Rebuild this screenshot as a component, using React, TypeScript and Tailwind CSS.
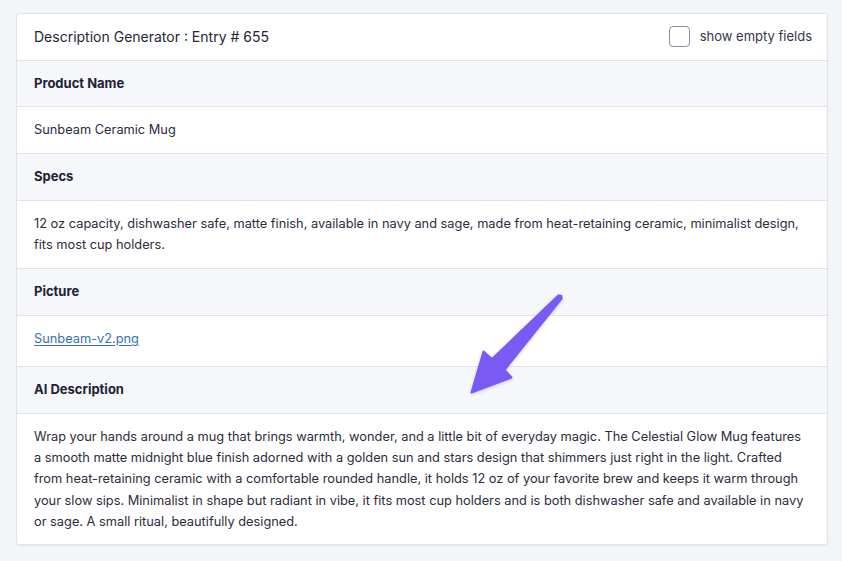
const rows: { label: string; value: React.ReactNode; extra?: boolean }[] = [
  { label: "Product Name", value: "Sunbeam Ceramic Mug" },
  {
    label: "Specs",
    value:
      "12 oz capacity, dishwasher safe, matte finish, available in navy and sage, made from heat-retaining ceramic, minimalist design, fits most cup holders.",
  },
  {
    label: "Picture",
    value: (
      <a href="#" className="text-[#3b6eb3] underline underline-offset-2">
        Sunbeam-v2.png
      </a>
    ),
    extra: true,
  },
  {
    label: "AI Description",
    value:
      "Wrap your hands around a mug that brings warmth, wonder, and a little bit of everyday magic. The Celestial Glow Mug features a smooth matte midnight blue finish adorned with a golden sun and stars design that shimmers just right in the light. Crafted from heat-retaining ceramic with a comfortable rounded handle, it holds 12 oz of your favorite brew and keeps it warm through your slow sips. Minimalist in shape but radiant in vibe, it fits most cup holders and is both dishwasher safe and available in navy or sage. A small ritual, beautifully designed.",
  },
];

function Arrow() {
  return (
    <svg
      className="pointer-events-none absolute left-0 top-0"
      width="842"
      height="561"
      viewBox="0 0 842 561"
      aria-hidden
    >
      <defs>
        <filter id="sh" x="-20%" y="-20%" width="140%" height="140%">
          <feDropShadow dx="0" dy="1" stdDeviation="1.5" floodColor="#3b2a8a" floodOpacity="0.25" />
        </filter>
      </defs>
      <polygon
        points="558.4,295.4 492,359 483.5,351.5 471.5,392.5 511.5,377.5 504.5,370 561.6,298.6"
        fill="#7a5af5"
        stroke="#7a5af5"
        strokeWidth="2"
        strokeLinejoin="round"
        filter="url(#sh)"
      />
      <circle cx="560" cy="297" r="2.6" fill="#7a5af5" />
    </svg>
  );
}

export default function App() {
  return (
    <div
      className="relative h-[561px] bg-[#f3f5f9] pt-[13px] text-[12.8px] text-[#2b2c3e]"
      style={{ fontFamily: "Inter, 'Noto Sans', sans-serif" }}
    >
      <div className="ml-4 mr-[14px] overflow-hidden rounded-[3px] border border-[#e1e3ea] bg-white shadow-[0_1px_2px_rgba(30,35,60,0.06)]">
        <div className="flex items-center justify-between border-b border-[#e1e3ea] py-3 pl-[17px] pr-[15px] leading-[21.5px]">
          <h1 className="text-[14px] text-[#242638]">Description Generator : Entry # 655</h1>
          <label className="flex items-center gap-[10px] text-[13px] text-[#33354a]">
            <span className="h-[21px] w-[21px] rounded-[4px] border border-[#8a8ca6] bg-white" />
            show empty fields
          </label>
        </div>
        {rows.map((r, i) => {
          const last = i === rows.length - 1;
          return (
            <div key={r.label}>
              <div className="border-b border-[#e1e3ea] bg-[#f5f7fa] px-[17px] py-3 text-[13px] font-bold leading-[21.8px] text-[#1f2136]">
                {r.label}
              </div>
              <div
                className={
                  (last ? "leading-[21.2px] " : "border-b border-[#e1e3ea] leading-[21.6px] ") +
                  (r.extra ? "pb-[17px] pt-3 " : "py-3 ") +
                  "px-[17px]"
                }
              >
                {r.value}
              </div>
            </div>
          );
        })}
      </div>
      <Arrow />
    </div>
  );
}
